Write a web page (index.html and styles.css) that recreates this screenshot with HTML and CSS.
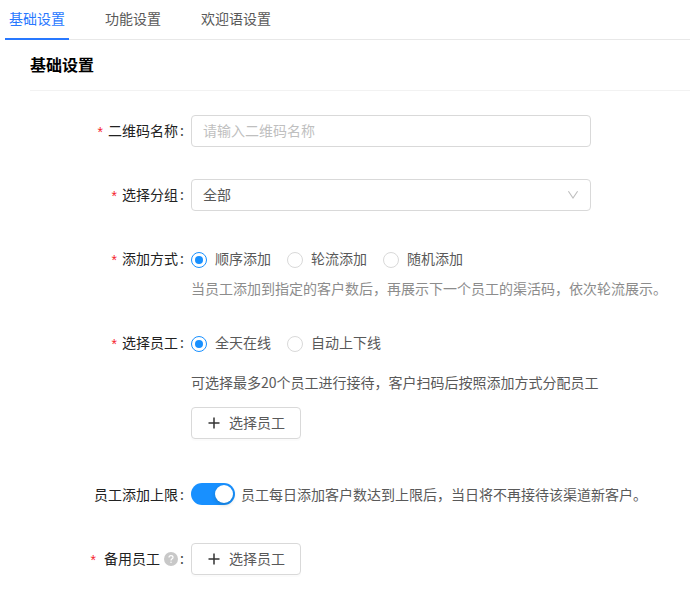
FILE: index.html
```html
<!DOCTYPE html>
<html lang="zh-CN">
<head>
<meta charset="utf-8">
<title>基础设置</title>
<link rel="stylesheet" href="styles.css">
</head>
<body>
<nav class="tabs">
  <a class="tab tab-active">基础设置</a>
  <a class="tab">功能设置</a>
  <a class="tab">欢迎语设置</a>
</nav>
<main class="panel">
  <h1 class="title">基础设置</h1>
  <form class="form">
    <div class="row">
      <label class="label"><i class="star">*</i>二维码名称<span class="colon">:</span></label>
      <input class="field" type="text" placeholder="请输入二维码名称">
    </div>
    <div class="row">
      <label class="label"><i class="star">*</i>选择分组<span class="colon">:</span></label>
      <div class="field select">
        <span>全部</span>
        <svg class="chevron" width="12" height="12" viewBox="0 0 12 12"><path d="M1.4 2.3 6 9 10.6 2.3" fill="none" stroke="#bfbfbf" stroke-width="1.1"/></svg>
      </div>
    </div>
    <div class="row row-hint">
      <label class="label"><i class="star">*</i>添加方式<span class="colon">:</span></label>
      <div class="control">
        <div class="radios">
          <span class="radio"><i class="dot dot-on"></i>顺序添加</span>
          <span class="radio"><i class="dot"></i>轮流添加</span>
          <span class="radio"><i class="dot"></i>随机添加</span>
        </div>
        <p class="hint">当员工添加到指定的客户数后，再展示下一个员工的渠活码，依次轮流展示。</p>
      </div>
    </div>
    <div class="row row-staff">
      <label class="label"><i class="star">*</i>选择员工<span class="colon">:</span></label>
      <div class="control">
        <div class="radios">
          <span class="radio"><i class="dot dot-on"></i>全天在线</span>
          <span class="radio"><i class="dot"></i>自动上下线</span>
        </div>
        <p class="note">可选择最多20个员工进行接待，客户扫码后按照添加方式分配员工</p>
        <button class="button" type="button"><svg class="plus" width="12" height="12" viewBox="0 0 12 12"><path d="M6 .5v11M.5 6h11" fill="none" stroke="#333" stroke-width="1.5"/></svg>选择员工</button>
      </div>
    </div>
    <div class="row row-limit">
      <label class="label">员工添加上限<span class="colon">:</span></label>
      <div class="switch-line"><span class="switch"></span>员工每日添加客户数达到上限后，当日将不再接待该渠道新客户。</div>
    </div>
    <div class="row">
      <label class="label"><i class="star star-wide">*</i>备用员工<svg class="help" width="14" height="14" viewBox="0 0 14 14"><circle cx="7" cy="7" r="7" fill="#c8c8c8"/><path d="M5 5.5C5 4.3 5.8 3.6 7 3.6s2 .7 2 1.8c0 1.4-2 1.5-2 3.1" fill="none" stroke="#fff" stroke-width="1.2"/><circle cx="7" cy="10.3" r=".75" fill="#fff"/></svg><span class="colon">:</span></label>
      <button class="button" type="button"><svg class="plus" width="12" height="12" viewBox="0 0 12 12"><path d="M6 .5v11M.5 6h11" fill="none" stroke="#333" stroke-width="1.5"/></svg>选择员工</button>
    </div>
  </form>
</main>
</body>
</html>
```
FILE: styles.css
```css
* {
  box-sizing: border-box;
}

body {
  margin: 0;
  background: #fff;
  color: #595959;
  font: 14px/22px "Noto Sans CJK SC", sans-serif;
  overflow: hidden;
}

p {
  margin: 0;
  white-space: nowrap;
}

.tabs {
  display: flex;
  gap: 32px;
  height: 40px;
  margin-left: 5px;
  box-shadow: inset 0 -1px #e8e8e8;
}

.tab {
  padding: 7px 4px 0;
  border-bottom: 2px solid transparent;
}

.tab-active {
  color: #2878ff;
  border-bottom-color: #2878ff;
}

.panel {
  margin-left: 30px;
}

.title {
  height: 51px;
  margin: 0;
  padding-top: 12px;
  border-bottom: 1px solid #f2f2f2;
  color: #000;
  font-size: 16px;
  line-height: 24px;
  font-weight: 700;
}

.form {
  padding-top: 24px;
}

.row {
  display: flex;
  align-items: flex-start;
  margin-bottom: 32px;
}

.row-hint {
  margin-bottom: 24px;
}

.row-staff {
  margin-bottom: 39px;
}

.row-limit {
  margin-bottom: 33px;
}

.label {
  display: flex;
  align-items: center;
  justify-content: flex-end;
  width: 161px;
  height: 32px;
  padding-bottom: 2px;
  color: #222;
}

.star {
  margin-right: 5px;
  color: #f5222d;
  font: 14px/14px "Liberation Sans", sans-serif;
  padding-top: 3px;
}

.star-wide {
  margin-right: 8px;
}

.colon {
  width: 11px;
  margin-left: 2px;
  color: #444;
}

.help {
  margin: 2px 0 0 4px;
}

.field {
  width: 400px;
  height: 32px;
  padding: 0 11px 2px;
  border: 1px solid #d9d9d9;
  border-radius: 4px;
  background: #fff;
  color: #595959;
  font: inherit;
}

.field::placeholder {
  color: #bfbfbf;
}

.select {
  display: flex;
  align-items: center;
  justify-content: space-between;
}

.chevron {
  margin-top: 2px;
}

.radios {
  display: flex;
  gap: 16px;
  height: 32px;
}

.radio {
  display: flex;
  align-items: center;
  gap: 8px;
  padding-bottom: 2px;
}

.dot {
  display: grid;
  place-items: center;
  width: 16px;
  height: 16px;
  margin-top: 4px;
  border: 1px solid #d9d9d9;
  border-radius: 50%;
}

.dot-on {
  border-color: #1890ff;
}

.dot-on::after {
  content: "";
  width: 8px;
  height: 8px;
  border-radius: 50%;
  background: #1890ff;
}

.hint {
  height: 28px;
  line-height: 26px;
  color: #8c8c8c;
}

.note {
  height: 24px;
  margin: 12px 0;
  line-height: 22px;
}

.button {
  display: flex;
  align-items: center;
  gap: 9px;
  width: 110px;
  height: 32px;
  padding: 0 0 2px 16px;
  border: 1px solid #d9d9d9;
  border-radius: 4px;
  background: #fff;
  box-shadow: 0 2px 0 rgba(0, 0, 0, 0.015);
  color: #595959;
  font: inherit;
}

.plus {
  margin-top: 2px;
}

.switch-line {
  display: flex;
  align-items: center;
  gap: 6px;
  height: 32px;
  white-space: nowrap;
}

.row-limit .label {
  padding-bottom: 0;
}

.switch {
  display: flex;
  justify-content: flex-end;
  width: 44px;
  height: 22px;
  padding: 2px;
  border-radius: 11px;
  background: #1890ff;
}

.switch::after {
  content: "";
  width: 18px;
  height: 18px;
  border-radius: 50%;
  background: #fff;
  box-shadow: 0 2px 4px rgba(0, 35, 11, 0.2);
}
```
